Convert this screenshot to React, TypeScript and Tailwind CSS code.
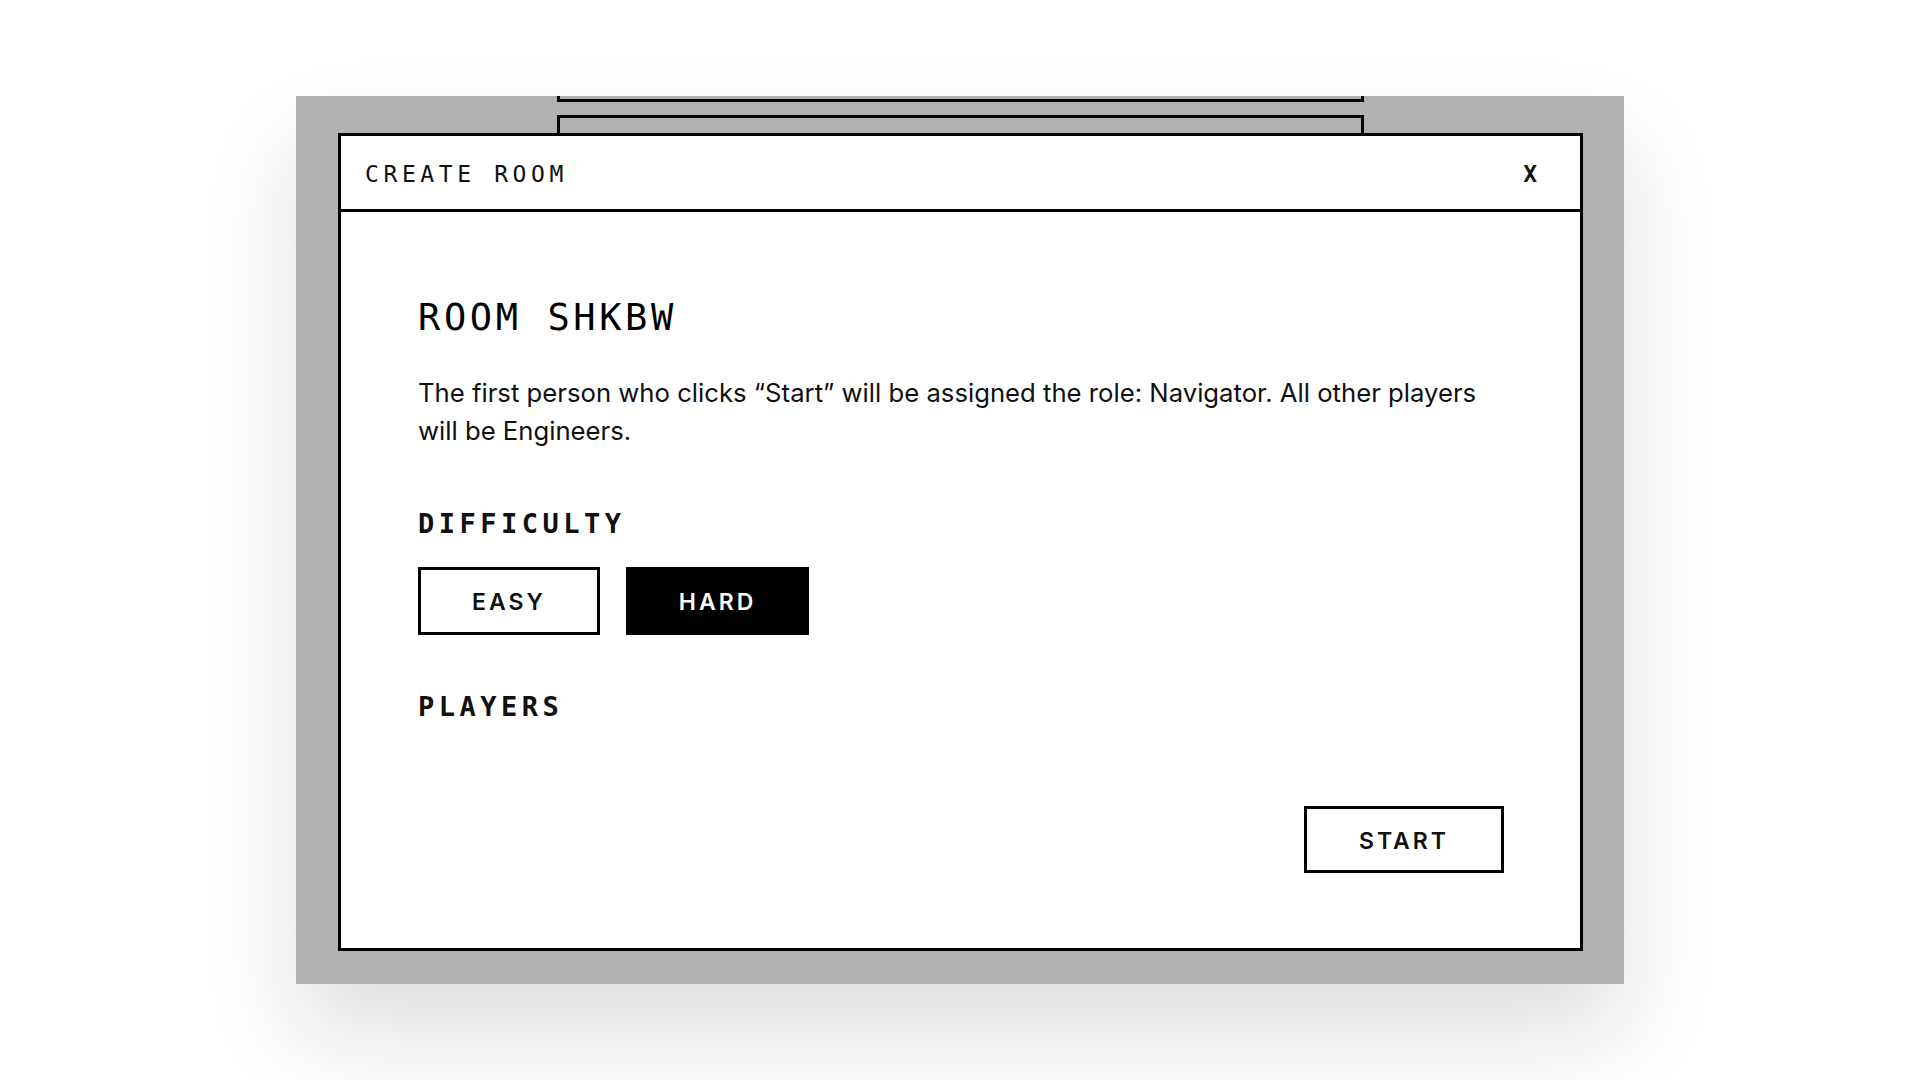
export default function App() {
  const mono = "font-['DejaVu_Sans_Mono','Liberation_Mono',monospace]";
  const sans = "font-['Inter','Noto_Sans',sans-serif]";

  return (
    <div className="w-full h-screen bg-white overflow-hidden pt-[96px] pl-[296px]">
      <div className="relative w-[1328px] h-[888px] bg-[#b1b1b1] overflow-hidden pt-[37px] pl-[42px] shadow-[0_50px_90px_rgba(0,0,0,0.13)]">
        {/* stacked cards behind the modal */}
        <div className="absolute left-[261px] top-[-40px] w-[807px] h-[46px] border-[3px] border-black" />
        <div className="absolute left-[261px] top-[19px] w-[807px] h-[300px] border-[3px] border-black" />

        <div className="relative w-[1245px] h-[818px] bg-white border-[3px] border-black flex flex-col">
          <div className="h-[76px] border-b-[3px] border-black flex items-center justify-between pt-[4px] pl-[24px] pr-[43px]">
            <span className={`${mono} text-[23px] tracking-[4.6px] text-[#111]`}>CREATE ROOM</span>
            <button className={`${mono} text-[23px] font-bold text-[#111]`}>X</button>
          </div>

          <div className="flex-1 flex flex-col pl-[77px] pr-[76px] pt-[87px] pb-[75px]">
            <h1 className={`${mono} text-[37px] leading-none tracking-[3.6px] text-black`}>ROOM SHKBW</h1>
            <p className={`${sans} text-[25.7px] leading-[38px] text-[#111] mt-[38px] max-w-[1080px]`}>
              The first person who clicks “Start” will be assigned the role: Navigator. All other players will be Engineers.
            </p>

            <h2 className={`${mono} text-[27px] leading-none font-bold tracking-[4.5px] text-[#111] mt-[60px]`}>DIFFICULTY</h2>
            <div className="flex gap-[26px] mt-[30px]">
              <button className={`${sans} w-[182px] h-[68px] pt-[3px] border-[3px] border-black bg-white text-[23px] font-semibold tracking-[3px] text-[#111]`}>
                EASY
              </button>
              <button className={`${sans} w-[183px] h-[68px] pt-[3px] border-[3px] border-black bg-black text-[23px] font-semibold tracking-[3px] text-white`}>
                HARD
              </button>
            </div>

            <h2 className={`${mono} text-[27px] leading-none font-bold tracking-[4.5px] text-[#111] mt-[58px]`}>PLAYERS</h2>

            <div className="flex-1" />
            <div className="flex justify-end">
              <button className={`${sans} w-[200px] h-[67px] pt-[3px] border-[3px] border-black bg-white text-[23px] font-semibold tracking-[3px] text-[#111]`}>
                START
              </button>
            </div>
          </div>
        </div>
      </div>
    </div>
  );
}
